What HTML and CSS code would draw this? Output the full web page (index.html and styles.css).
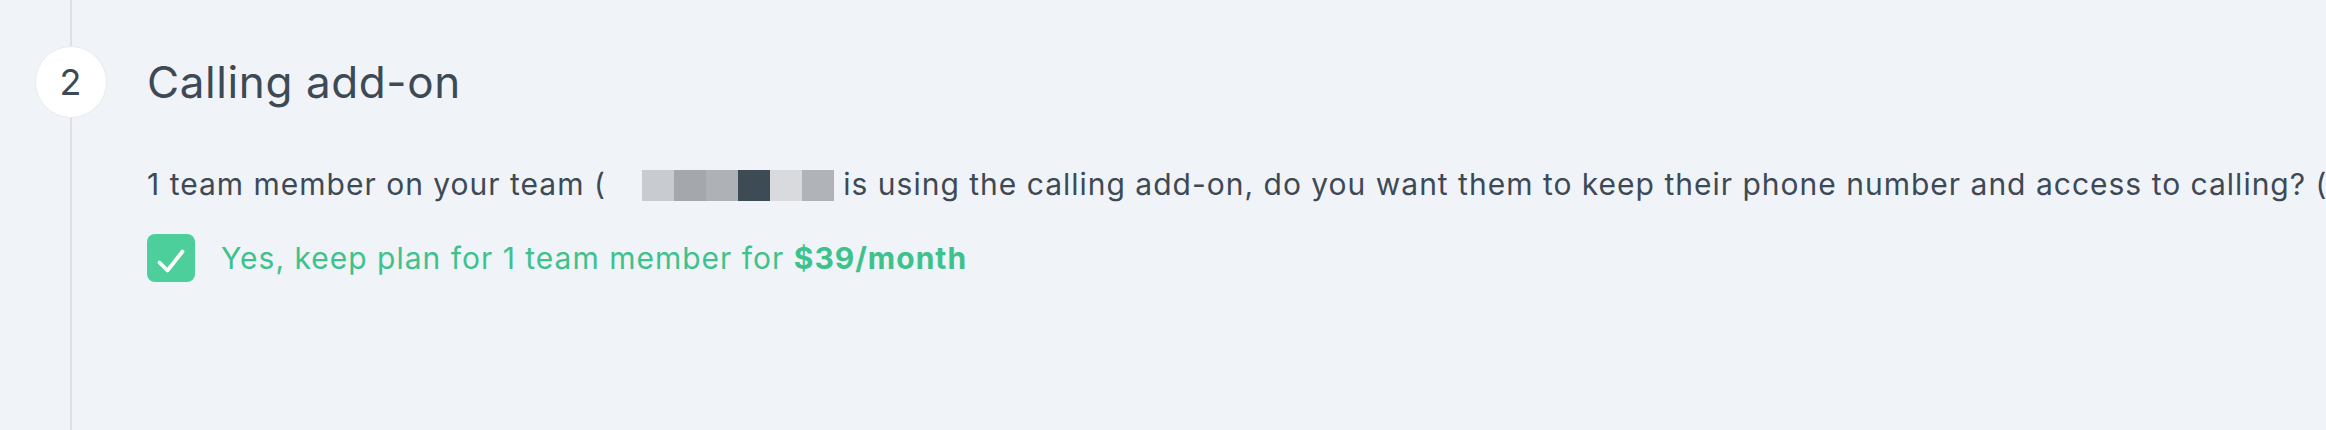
FILE: index.html
```html
<!DOCTYPE html>
<html lang="en">
<head>
  <meta charset="UTF-8">
  <title>Calling add-on</title>
  <link rel="stylesheet" href="styles.css">
</head>
<body>
  <div class="step">
    <div class="rail">
      <div class="rail-line rail-top"></div>
      <div class="step-num">2</div>
      <div class="rail-line rail-bottom"></div>
    </div>
    <div class="step-body">
      <h2 class="step-title">Calling add-on</h2>
      <p class="step-text">1 team member on your team (<span class="redact"><span class="px px1"></span><span class="px px2"></span><span class="px px3"></span><span class="px px4"></span><span class="px px5"></span><span class="px px6"></span></span> is using the calling add-on, do you want them to keep their phone number and access to calling? (</p>
      <label class="keep">
        <span class="check">
          <svg width="48" height="48" viewBox="0 0 48 48"><path d="M12.5 28.5l8 8L35.5 17.5" fill="none" stroke="#fff" stroke-width="3.8" stroke-linecap="round" stroke-linejoin="round"/></svg>
        </span>
        <span class="keep-text">Yes, keep plan for 1 team member for <strong>$39/month</strong></span>
      </label>
    </div>
  </div>
</body>
</html>
```

FILE: styles.css
```css
body {
  margin: 0;
  background-color: #f0f3f8;
  font-family: Inter, "Open Sans", sans-serif;
  color: #3d4a55;
  overflow: hidden;
}
.step {
  display: flex;
  height: 430px;
  white-space: nowrap;
}
.rail {
  width: 141px;
  flex-shrink: 0;
  display: flex;
  flex-direction: column;
  align-items: center;
}
.rail-line {
  width: 2px;
  background-color: #dde0e5;
}
.rail-top {
  height: 46px;
}
.rail-bottom {
  flex: 1;
}
.step-num {
  width: 70px;
  height: 70px;
  border: 1px solid #e8ebef;
  border-radius: 50%;
  background-color: #fff;
  display: flex;
  align-items: center;
  justify-content: center;
  font-size: 36px;
}
.step-body {
  padding-left: 6px;
  padding-top: 46px;
}
.step-title {
  margin: 0;
  height: 72px;
  line-height: 72px;
  font-size: 44px;
  font-weight: 400;
  letter-spacing: 0.6px;
}
.step-text {
  margin: 46px 0 0;
  font-size: 30px;
  line-height: 40px;
  letter-spacing: 1px;
}
.redact {
  display: inline-flex;
  vertical-align: -6px;
  margin-left: 36px;
}
.px {
  width: 32px;
  height: 31px;
}
.px1 { background-color: #c8cbcf; }
.px2 { background-color: #a4a7ac; }
.px3 { background-color: #aeb1b5; }
.px4 { background-color: #3d4b55; }
.px5 { background-color: #d8dadd; }
.px6 { background-color: #b0b3b8; }
.keep {
  display: flex;
  align-items: center;
  margin-top: 30px;
  color: #3ec28c;
  font-size: 30px;
  letter-spacing: 1px;
}
.check {
  width: 48px;
  height: 48px;
  border-radius: 8px;
  background-color: #4ccf9a;
  display: flex;
  margin-right: 26px;
}
.keep-text strong {
  font-weight: 700;
}
```
